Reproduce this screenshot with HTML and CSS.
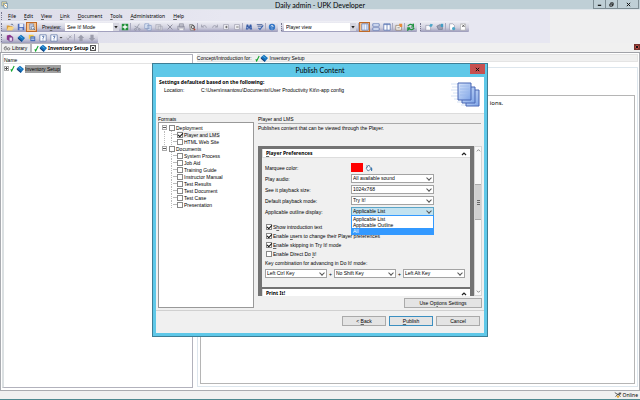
FILE: index.html
```html
<!DOCTYPE html>
<html lang="en">
<head>
<meta charset="utf-8">
<title>Daily admin - UPK Developer</title>
<link rel="stylesheet" href="styles.css">
</head>
<body>
<svg class="sprite" aria-hidden="true">
  <symbol id="i-open" viewBox="0 0 10 10"><path d="M1 3h3l1 1h3v5H1z" fill="#d99a3a"/><path d="M3 5h7L8 9H1z" fill="#f9d583"/><path d="M6 2q2-2 3 1" stroke="#5a6a90" fill="none"/></symbol>
  <symbol id="i-save" viewBox="0 0 10 10"><path d="M1 1h8v8H1z" fill="#4a68b8"/><path d="M3 1h5v4H3z" fill="#e8eefa"/><path d="M3 6h4v3H3z" fill="#b7c4e0"/></symbol>
  <symbol id="i-preview" viewBox="0 0 10 10"><path d="M2 1h5v7H2z" fill="#c2cbe0" stroke="#68779b" stroke-width=".7"/><circle cx="6" cy="6" r="2" fill="#dfe8f5" stroke="#70829f"/><path d="M7 7l2 2" stroke="#50617d"/></symbol>
  <symbol id="i-add" viewBox="0 0 10 10"><path d="M1 1h8v8H1z" fill="#22903a"/><path d="M5 2v6M2 5h6" stroke="#fff" stroke-width="1.6"/></symbol>
  <symbol id="i-cut" viewBox="0 0 10 10"><path d="M8 1L4 7M2 4l6 3" stroke="#9295a5"/><circle cx="3" cy="8" r="1.2" fill="none" stroke="#9295a5"/><circle cx="8" cy="8" r="1" fill="none" stroke="#9295a5"/></symbol>
  <symbol id="i-copy" viewBox="0 0 10 10"><path d="M1 1h5v6H1zM4 3h5v6H4z" fill="#e4ecf8" stroke="#7890bd" stroke-width=".8"/><path d="M5 5h3M5 7h3" stroke="#7890bd" stroke-width=".6"/></symbol>
  <symbol id="i-paste" viewBox="0 0 10 10"><path d="M1 2h6v6H1zM4 4h5v5H4z" fill="#d5d5de" stroke="#a4a5b4" stroke-width=".8"/></symbol>
  <symbol id="i-x" viewBox="0 0 10 10"><path d="M2 2l6 6M8 2L2 8" stroke="#8b8c9c" stroke-width="1.2"/></symbol>
  <symbol id="i-print" viewBox="0 0 10 10"><path d="M3 1h5v4H3zM1 4h8v4H1z" fill="#c6c6d0" stroke="#88899a" stroke-width=".8"/><path d="M3 7h5v2H3z" fill="#eee"/></symbol>
  <symbol id="i-find" viewBox="0 0 10 10"><path d="M2 2h4l2 3v4H3z" fill="#ddd" stroke="#666" stroke-width=".8"/><circle cx="6" cy="5" r="2" fill="none" stroke="#444"/><path d="M7 7l2 2" stroke="#bd3b26" stroke-width="1.5"/></symbol>
  <symbol id="i-undo" viewBox="0 0 10 10"><path d="M2 2v3h3M2 5q5-4 6 1" fill="none" stroke="#a2a3b3" stroke-width="1.2"/></symbol>
  <symbol id="i-redo" viewBox="0 0 10 10"><path d="M8 2v3H5M8 5Q3 1 2 6" fill="none" stroke="#a2a3b3" stroke-width="1.2"/></symbol>
  <symbol id="i-box" viewBox="0 0 10 10"><path d="M2 2h6v6H2z" fill="#f3f3f7" stroke="#9696a5" stroke-width=".8"/><path d="M4 5h3" stroke="#555"/></symbol>
  <symbol id="i-boxplus" viewBox="0 0 10 10"><path d="M2 2h6v6H2z" fill="#f3f3f7" stroke="#9696a5" stroke-width=".8"/><path d="M4 5h3M5.500 3.500v3" stroke="#555"/></symbol>
  <symbol id="i-binoc" viewBox="0 0 10 10"><path d="M2 2h2l1 3 1-3h2l1 6H6L5 6 4 8H1z" fill="#345aa5"/><path d="M2 6h2M7 6h1" stroke="#c5d8f5"/></symbol>
  <symbol id="i-spell" viewBox="0 0 10 10"><path d="M1 2h7M2 4h6" stroke="#3b5590"/><path d="M3 6l2 2 4-5" fill="none" stroke="#3f68b0" stroke-width="1.4"/></symbol>
  <symbol id="i-help" viewBox="0 0 10 10"><circle cx="5" cy="5" r="4" fill="#3577c6"/><path d="M3.500 4q1.500-2 3 0L5 5.500M5 7v1" fill="none" stroke="#fff"/></symbol>
  <symbol id="i-cols" viewBox="0 0 10 10"><path d="M1 1h8v8H1z" fill="#eef4ff" stroke="#5e79b5"/><path d="M4 1v8M7 1v8" stroke="#8ba5d6" stroke-width=".8"/></symbol>
  <symbol id="i-rows" viewBox="0 0 10 10"><path d="M1 1h8v3H1zM1 6h8v3H1z" fill="#eef4ff" stroke="#5e79b5"/></symbol>
  <symbol id="i-two" viewBox="0 0 10 10"><path d="M1 1h8v8H1z" fill="#fff" stroke="#5e79b5"/><path d="M5 1v8M1 2h8" stroke="#5e79b5"/></symbol>
  <symbol id="i-props" viewBox="0 0 10 10"><path d="M1 3h7v6H1z" fill="#f5f3ef" stroke="#88735c" stroke-width=".8"/><path d="M5 1h4v4H6z" fill="#e58b38"/><path d="M3 6h3" stroke="#777"/></symbol>
  <symbol id="i-sync" viewBox="0 0 10 10"><path d="M1 4q3-4 6-1l1-2v4H5M9 6q-3 4-6 1L1 9V6h3" fill="none" stroke="#239443" stroke-width="1.5"/></symbol>
  <symbol id="i-doc" viewBox="0 0 10 10"><path d="M1 3h6v6H1z" fill="#fafafd" stroke="#8d91a6" stroke-width=".8"/><path d="M5 4l2-3 3 1-2 3z" fill="#4aa5c8"/></symbol>
  <symbol id="i-docs" viewBox="0 0 10 10"><path d="M1 4l4-2 3 2v4H3z" fill="#9da2b5" stroke="#6d7389" stroke-width=".8"/><path d="M6 1h3v4H6z" fill="#439dc4"/></symbol>
  <symbol id="i-docdown" viewBox="0 0 10 10"><path d="M2 1h4l2 2v6H2z" fill="#fff" stroke="#8d91a6" stroke-width=".8"/><circle cx="7" cy="7" r="2" fill="#4aa5c8"/></symbol>
  <symbol id="i-docx" viewBox="0 0 10 10"><path d="M2 1h6v8H2z" fill="#fff" stroke="#aaa" stroke-width=".8"/><path d="M4 2l3 3M7 2L4 5" stroke="#444"/></symbol>
  <symbol id="i-module" viewBox="0 0 10 10"><path d="M1 2l4-1 4 3v4L5 9 1 7z" fill="#8d338e"/><path d="M4 4h4v5H4z" fill="#eddcf4" stroke="#5e367d" stroke-width=".7"/></symbol>
  <symbol id="i-book" viewBox="0 0 10 10"><path d="M1 4l4-3 5 4-4 5z" fill="#1572bd"/><path d="M1 4l5 4v2L1 6z" fill="#123f7c"/><path d="M4 3l3 2" stroke="#6bc3ef"/></symbol>
  <symbol id="i-topic" viewBox="0 0 10 10"><path d="M1 1h6v5H1z" fill="#f7cc47"/><path d="M3 3h6v6H3z" fill="#3d68b8"/><path d="M4 5h4M4 7h4" stroke="#fff" stroke-width=".8"/></symbol>
  <symbol id="i-question" viewBox="0 0 10 10"><path d="M1 1h8v8H1z" fill="#fafbff" stroke="#6b7fac"/><path d="M4 3q3-1 2 1L5 5v1M5 7v1" fill="none" stroke="#34589b"/></symbol>
  <symbol id="i-link" viewBox="0 0 10 10"><path d="M3 7l5-5M2 5l3 3M5 2l3 3" stroke="#a5a5b2" stroke-width="1.2"/></symbol>
  <symbol id="i-up" viewBox="0 0 10 10"><path d="M5 1l4 4H7v4H3V5H1z" fill="#9b9cab"/></symbol>
  <symbol id="i-down" viewBox="0 0 10 10"><path d="M5 9L1 5h2V1h4v4h2z" fill="#9b9cab"/></symbol>
  <symbol id="i-check" viewBox="0 0 6 8"><path d="M1 5l1 2 3-6" fill="none" stroke="#12a52c" stroke-width="1.300"/></symbol>
  <symbol id="i-glasses" viewBox="0 0 10 8"><path d="M1 4q2-3 4-1M5 5h4" fill="none" stroke="#666"/><circle cx="3" cy="5" r="1.500" fill="#ddd" stroke="#555" stroke-width=".7"/><circle cx="7" cy="5" r="1.500" fill="#ddd" stroke="#555" stroke-width=".7"/></symbol>
  <symbol id="i-app" viewBox="0 0 10 10"><path d="M1 1h6v5H1z" fill="#f5e6a0" stroke="#6a7f92" stroke-width=".8"/><path d="M3 3h5v6H4z" fill="#fff" stroke="#46708f" stroke-width=".8"/><path d="M4 4l3 3" stroke="#d49a28"/></symbol>
</svg>

<header class="titlebar">
  <svg class="icon app-icon"><use href="#i-app"/></svg>
  <h1 class="window-title">Daily admin - UPK Developer</h1>
  <div class="window-buttons">
    <button aria-label="Minimize"><svg viewBox="0 0 6 6"><path d="M1 4h4" stroke="#111" stroke-width="1.500"/></svg></button>
    <button aria-label="Restore"><svg viewBox="0 0 6 6"><path d="M2 2V1h3v3H4M1 2.500h3v2.500H1z" fill="none" stroke="#111"/></svg></button>
    <button class="wide" aria-label="Close"><svg viewBox="0 0 6 6"><path d="M1 1l4 4M5 1L1 5" stroke="#111" stroke-width="1.200"/></svg></button>
  </div>
</header>

<section class="bars">
  <nav class="menubar">
    <span class="grip"></span>
    <a href="#"><u>F</u>ile</a><a href="#"><u>E</u>dit</a><a href="#"><u>V</u>iew</a><a href="#"><u>L</u>ink</a><a href="#"><u>D</u>ocument</a><a href="#"><u>T</u>ools</a><a href="#"><u>A</u>dministration</a><a href="#"><u>H</u>elp</a>
  </nav>
  <div class="toolbar-row">
    <div class="toolbar">
      <span class="grip"></span>
      <button class="tool" aria-label="Open"><svg><use href="#i-open"/></svg></button>
      <button class="tool" aria-label="Save"><svg><use href="#i-save"/></svg></button>
      <button class="tool active" aria-label="Preview pane"><svg><use href="#i-preview"/></svg></button>
      <label class="preview-label" for="mode">Pre<u>v</u>iew:</label>
      <span class="bar-select mode"><select id="mode"><option>See It! Mode</option></select></span>
      <button class="tool" aria-label="Add"><svg><use href="#i-add"/></svg></button>
      <span class="sep"></span>
      <button class="tool" aria-label="Cut"><svg><use href="#i-cut"/></svg></button>
      <button class="tool" aria-label="Copy"><svg><use href="#i-copy"/></svg></button>
      <button class="tool" aria-label="Paste"><svg><use href="#i-paste"/></svg></button>
      <button class="tool" aria-label="Delete"><svg><use href="#i-x"/></svg></button>
      <button class="tool" aria-label="Print"><svg><use href="#i-print"/></svg></button>
      <button class="tool" aria-label="Print preview"><svg><use href="#i-find"/></svg></button>
      <span class="sep"></span>
      <button class="tool" aria-label="Undo"><svg><use href="#i-undo"/></svg></button>
      <button class="tool" aria-label="Redo"><svg><use href="#i-redo"/></svg></button>
      <button class="tool" aria-label="Expand"><svg><use href="#i-boxplus"/></svg></button>
      <button class="tool" aria-label="Collapse"><svg><use href="#i-box"/></svg></button>
      <span class="sep"></span>
      <button class="tool" aria-label="Find"><svg><use href="#i-binoc"/></svg></button>
      <button class="tool" aria-label="Spelling"><svg><use href="#i-spell"/></svg></button>
      <span class="sep"></span>
      <button class="tool" aria-label="Help"><svg><use href="#i-help"/></svg></button>
    </div>
    <div class="toolbar">
      <span class="grip"></span>
      <span class="bar-select view"><select aria-label="View"><option>Player view</option></select></span>
      <span class="sep"></span>
      <button class="tool active" aria-label="Columns"><svg><use href="#i-cols"/></svg></button>
      <button class="tool" aria-label="Rows"><svg><use href="#i-rows"/></svg></button>
      <button class="tool" aria-label="Split"><svg><use href="#i-two"/></svg></button>
      <span class="sep"></span>
      <button class="tool" aria-label="Properties"><svg><use href="#i-props"/></svg></button>
      <span class="sep"></span>
      <button class="tool" aria-label="Refresh"><svg><use href="#i-sync"/></svg></button>
    </div>
    <div class="toolbar">
      <span class="grip"></span>
      <button class="tool" aria-label="Check out"><svg><use href="#i-doc"/></svg></button>
      <button class="tool" aria-label="Check in"><svg><use href="#i-docs"/></svg></button>
      <span class="sep"></span>
      <button class="tool" aria-label="Get"><svg><use href="#i-docdown"/></svg></button>
      <button class="tool" aria-label="Cancel check out"><svg><use href="#i-docx"/></svg></button>
    </div>
  </div>
  <div class="toolbar-row">
    <div class="toolbar">
      <span class="grip"></span>
      <button class="tool" aria-label="New module"><svg><use href="#i-module"/></svg></button>
      <button class="tool" aria-label="New section"><svg><use href="#i-book"/></svg></button>
      <button class="tool" aria-label="New topic"><svg><use href="#i-topic"/></svg></button>
      <button class="tool" aria-label="New question"><svg><use href="#i-question"/></svg></button>
      <button class="tool" aria-label="New assessment"><svg><use href="#i-question"/></svg></button>
      <span class="drop-arrow"></span>
      <button class="tool" aria-label="Link"><svg><use href="#i-link"/></svg></button>
      <span class="sep"></span>
      <button class="tool" aria-label="Move up"><svg><use href="#i-up"/></svg></button>
      <button class="tool" aria-label="Move down"><svg><use href="#i-down"/></svg></button>
    </div>
  </div>
</section>

<nav class="tabs">
  <a href="#" class="tab"><svg class="icon"><use href="#i-glasses"/></svg>Library</a>
  <a href="#" class="tab current"><svg class="tick"><use href="#i-check"/></svg><svg class="icon"><use href="#i-book"/></svg>Inventory Setup<span class="tab-close"><svg viewBox="0 0 6 6"><path d="M1 1l4 4M5 1L1 5" stroke="#111" stroke-width="1.200"/></svg></span></a>
  <button class="pane-close" aria-label="Close pane"><svg viewBox="0 0 6 6"><path d="M1 1l4 4M5 1L1 5" stroke="#111" stroke-width="1.500"/></svg></button>
</nav>

<main class="workspace">
  <section class="outline">
    <h2 class="outline-head">Name</h2>
    <div class="outline-row"><span class="expander"></span><svg class="tick"><use href="#i-check"/></svg><svg class="icon"><use href="#i-book"/></svg><span class="selected">Inventory Setup</span></div>
  </section>
  <section class="concept">
    <div class="concept-head">Concept/Introduction for:<svg class="tick"><use href="#i-check"/></svg><svg class="icon"><use href="#i-book"/></svg>Inventory Setup</div>
    <div class="concept-frame"><div class="concept-page"><p>ions.</p></div></div>
  </section>
</main>

<footer class="status"><svg class="icon" viewBox="0 0 10 8"><path d="M1 1l3 2h4M2 6l3-3 3 3" fill="none" stroke="#333"/><circle cx="5" cy="6" r="1.500" fill="#e6a82e"/><path d="M6 1h3v2H6z" fill="#555"/></svg>Online</footer>

<div class="overlay">
<section class="dialog" role="dialog" aria-labelledby="dialog-title">
  <header class="dialog-title"><h2 id="dialog-title">Publish Content</h2><button class="dialog-close" aria-label="Close"><svg viewBox="0 0 6 6"><path d="M1 1l4 4M5 1L1 5" stroke="#111" stroke-width="1.200"/></svg></button></header>
  <div class="dialog-inner">
    <div class="banner">
      <div class="banner-text">
        <h3>Settings defaulted based on the following:</h3>
        <p><span class="loc">Location:</span><span>C:\Users\nsantosu\Documents\User Productivity Kit\n-app config</span></p>
      </div>
      <svg class="banner-icon" viewBox="0 0 30 26">
        <defs><linearGradient id="pg" x1="0" y1="0" x2="1" y2="1"><stop offset="0" stop-color="#d9e6fb"/><stop offset="1" stop-color="#7da3e6"/></linearGradient></defs>
        <path d="M0 2h7M1 5h6M0 8h7M2 11h5M0 14h7M3 17h8M6 20h9M10 23h6" stroke="#d5e2f5"/>
        <path d="M15 8h13v16H15z" fill="url(#pg)" stroke="#4966b4"/><path d="M11 5h13v16H11z" fill="url(#pg)" stroke="#4966b4"/><path d="M7 1h13v17H7z" fill="url(#pg)" stroke="#4966b4"/>
        <path d="M9 4h9M9 7h9M9 10h9M9 13h9" stroke="#9ab8eb" stroke-width=".8"/>
      </svg>
    </div>
    <div class="content">
      <section class="formats">
        <h4>Formats</h4>
        <ul class="tree">
          <li><span class="node"><span class="expander minus"></span><label><input type="checkbox">Deployment</label></span>
            <ul><li><label class="picked"><input type="checkbox" checked>Player and LMS</label></li><li><label><input type="checkbox">HTML Web Site</label></li></ul></li>
          <li><span class="node"><span class="expander minus"></span><label><input type="checkbox">Documents</label></span>
            <ul><li><label><input type="checkbox">System Process</label></li><li><label><input type="checkbox">Job Aid</label></li><li><label><input type="checkbox">Training Guide</label></li><li><label><input type="checkbox">Instructor Manual</label></li><li><label><input type="checkbox">Test Results</label></li><li><label><input type="checkbox">Test Document</label></li><li><label><input type="checkbox">Test Case</label></li><li><label><input type="checkbox">Presentation</label></li></ul></li>
        </ul>
      </section>
      <section class="settings">
        <h4>Player and LMS</h4>
        <p class="desc">Publishes content that can be viewed through the Player.</p>
        <div class="scroller">
          <div class="frame">
            <h5 class="group-head"><span><u>P</u>layer Preferences</span><svg viewBox="0 0 6 6"><path d="M1 4l2-2 2 2" fill="none" stroke="#222" stroke-width="1.200"/></svg></h5>
            <div class="group">
              <div class="field"><label for="color">Marquee color:</label><button id="color" class="swatch" aria-label="Red"></button><svg class="bucket" viewBox="0 0 8 8"><path d="M1 4l3-3 2 4-3 2zM2 1v3" fill="#eef4fa" stroke="#4e7397" stroke-width=".8"/><path d="M6 3q2 1 1 4H6z" fill="#3678b4"/></svg></div>
              <div class="field"><label for="audio">Play audio:</label><span class="select"><select id="audio"><option>All available sound</option></select></span></div>
              <div class="field"><label for="size">See it playback size:</label><span class="select"><select id="size"><option>1024x768</option></select></span></div>
              <div class="field"><label for="pmode">Default playback mode:</label><span class="select"><select id="pmode"><option>Try It!</option></select></span></div>
              <div class="field"><label for="display">Applicable outline display:</label><span class="select open"><select id="display"><option>Applicable List</option></select>
                <ul class="menu" role="listbox"><li role="option">Applicable List</li><li role="option">Applicable Outline</li><li role="option" class="hover">All</li></ul></span></div>
              <div class="checks">
                <label><input type="checkbox" checked><span>S<u>h</u>ow introduction text</span></label>
                <label><input type="checkbox" checked><span>Enable <u>u</u>sers to change their Player preferences</span></label>
                <label><input type="checkbox" checked><span><u>E</u>nable skipping in Try It! mode</span></label>
                <label><input type="checkbox"><span>Enable Direct Do <u>I</u>t!</span></label>
              </div>
              <p class="keys-title">Key combination for advancing in Do It! mode:</p>
              <div class="keys">
                <span class="select"><select aria-label="First key"><option>Left Ctrl Key</option></select></span><span class="plus">+</span>
                <span class="select"><select aria-label="Second key"><option>No Shift Key</option></select></span><span class="plus">+</span>
                <span class="select"><select aria-label="Third key"><option>Left Alt Key</option></select></span>
              </div>
            </div>
            <h5 class="group-head"><span>Print It!</span><svg viewBox="0 0 6 6"><path d="M1 4l2-2 2 2" fill="none" stroke="#222" stroke-width="1.200"/></svg></h5>
          </div>
          <div class="scrollbar" aria-hidden="true"><span class="arrow"><svg viewBox="0 0 6 6"><path d="M1 4l2-2 2 2" fill="none" stroke="#777"/></svg></span><span class="track"><span class="thumb"></span></span><span class="arrow"><svg viewBox="0 0 6 6"><path d="M1 2l2 2 2-2" fill="none" stroke="#777"/></svg></span></div>
        </div>
        <button class="btn options">Use Op<u>t</u>ions Settings</button>
      </section>
    </div>
    <footer class="actions"><button class="btn">&lt; <u>B</u>ack</button><button class="btn default"><u>P</u>ublish</button><button class="btn">Cancel</button></footer>
  </div>
</section>
</div>
</body>
</html>
```

FILE: styles.css
```css
* { box-sizing: border-box; margin: 0; padding: 0; }
body {
  height: 100vh; display: flex; flex-direction: column; overflow: hidden;
  background: #f0f0f0; color: #000;
  font: 5px/6px "Liberation Sans", sans-serif;
}
button, select, input { font: inherit; color: inherit; border: 0; background: none; appearance: none; border-radius: 0; }
button svg { display: block; }
a { color: inherit; text-decoration: none; }
ul { list-style: none; }
h1, h2, h3, h4, h5 { font: inherit; }
u { text-decoration: underline; text-decoration-color: #666; text-decoration-thickness: 1px; }
.sprite { position: absolute; width: 0; height: 0; }
.icon { width: 8px; height: 8px; flex: none; }
.tick { width: 5px; height: 7px; flex: none; }

.titlebar { flex: none; height: 10px; display: grid; grid-template-columns: 1fr auto 1fr; align-items: start; background: #bfcfd6; border-bottom: 1px solid #dfe5ea; }
.app-icon { margin: 1px 0 0 1px; }
.window-title { font-family: Lato, sans-serif; font-size: 7px; line-height: 10px; }
.window-buttons { justify-self: end; display: flex; margin-right: 1px; border: 1px solid #7e8d94; border-top: 0; }
.window-buttons button { width: 12px; height: 8px; display: grid; place-items: center; border-right: 1px solid #7e8d94; }
.window-buttons button.wide { width: 20px; border: 0; }
.window-buttons svg { width: 5px; height: 5px; }

.bars { flex: none; height: 33px; background: linear-gradient(90deg, #dcdce8, #e7e7f1 35%, #e7e7f1 86%, #efeff0 86%); }
.menubar { display: flex; align-items: center; gap: 8px; height: 11px; font-family: "Noto Sans", sans-serif; line-height: 8px; }
.menubar .grip { margin: 0 -4px 0 1px; }
.grip { flex: none; width: 3px; height: 8px; border-left: 1px dotted #77778f; }
.toolbar-row { display: flex; height: 11px; padding-left: 1px; }
.toolbar { display: flex; align-items: center; height: 11px; padding-right: 1px; margin-right: 3px; background: linear-gradient(#f1f1f7, #d0d0de 60%, #9c9bba); border-radius: 1px; }
.tool { flex: none; width: 11px; height: 10px; display: grid; place-items: center; }
.tool svg { width: 8px; height: 8px; }
.tool.active { background: #f8c28a; border: 1px solid #c06a28; }
.sep { flex: none; width: 1px; height: 8px; background: #aaaabf; }
.preview-label { width: 28px; padding-left: 5px; white-space: nowrap; }
.bar-select { position: relative; display: block; height: 8px; background: #fff; }
.bar-select select { display: block; width: 100%; height: 8px; padding-left: 2px; line-height: 8px; }
.bar-select::before { content: ""; position: absolute; right: 0; top: 0; width: 6px; height: 8px; background: #d5d5df; }
.bar-select::after { content: ""; position: absolute; right: 1px; top: 3px; width: 4px; height: 3px; background: #222; clip-path: polygon(0 0, 100% 0, 50% 100%); }
.mode { width: 54px; }
.view { width: 72px; margin-right: 2px; }
.drop-arrow { width: 4px; height: 2px; background: #444; clip-path: polygon(0 0, 100% 0, 50% 100%); }

.tabs { flex: none; display: flex; align-items: flex-end; height: 10px; padding-left: 1px; border-bottom: 1px solid #a0a2a8; line-height: 8px; }
.tab { display: flex; align-items: center; gap: 1px; width: 30px; height: 9px; padding: 0 1px; border: 1px solid #b8b8bd; border-bottom: 0; }
.tab.current { width: auto; gap: 0; padding: 0 2px; font-weight: 700; font-family: "Noto Sans", sans-serif; background: #fff; }
.tab.current .icon { margin-right: 1px; }
.tab-close { width: 6px; height: 6px; margin-left: 2px; border: 1px solid #555; }
.tab-close svg { display: block; width: 4px; height: 4px; }
.pane-close { margin: 0 0 2px auto; width: 6px; height: 6px; background: #b94c45; border: 1px solid #74302c; }

.workspace { flex: 1; min-height: 0; display: flex; gap: 4px; padding: 1px 1px 2px 1px; background: #fff; border: solid #a9abb0; border-width: 0 1px 1px; }
.outline { flex: 0 1 30%; border: 1px solid #b2b2bc; border-left: 2px solid #dbe0e2; }
.concept { flex: 1; display: flex; flex-direction: column; gap: 5px; padding-bottom: 1px; }
.outline-head { height: 9px; padding: 2px 0 0; border-bottom: 1px solid #e3e3e3; }
.outline-row { display: flex; align-items: center; gap: 1px; height: 9px; }
.expander { flex: none; width: 5px; height: 5px; border: 1px solid #aaa; background: linear-gradient(#555, #555) center / 3px 1px no-repeat, linear-gradient(#555, #555) center / 1px 3px no-repeat #fff; }
.expander.minus { background: linear-gradient(#555, #555) center / 3px 1px no-repeat #fff; }
.selected { height: 8px; padding: 0 1px 0 0; line-height: 8px; background: #a0a0a0; }
.concept-head { flex: none; display: flex; align-items: center; height: 8px; background: #f0f0f0; border: 1px solid #e4e4e4; border-left: 0; }
.concept-head .tick { margin-left: 3px; }
.concept-head .icon { margin-right: 2px; }
.concept-frame { flex: 1; display: flex; padding: 27px 2px 2px; border: 1px solid #dde6ed; }
.concept-page { flex: 1; border: 1px solid #b5b5b5; padding: 4px 0 0 289px; }
.concept-page p { font-family: "Noto Sans", sans-serif; font-size: 6px; line-height: 7px; }

.status { flex: none; display: flex; justify-content: flex-end; align-items: center; gap: 1px; height: 9px; padding-right: 2px; font-family: "Noto Sans", sans-serif; border-bottom: 1px solid #4f8990; }

.overlay { position: absolute; inset: 0; display: grid; place-items: center; }
.dialog { width: 336px; height: 274px; display: flex; flex-direction: column; padding: 0 3px 3px; background: #5fc8e8; border: 1px solid #3d7e96; }
.dialog-title { flex: none; position: relative; height: 13px; text-align: center; }
.dialog-title h2 { font-family: Lato, sans-serif; font-size: 7px; line-height: 13px; }
.dialog-close { position: absolute; right: -1px; top: 0; width: 15px; height: 10px; display: grid; place-items: center; background: #c75050; }
.dialog-close svg { width: 5px; height: 5px; }
.dialog-inner { flex: 1; min-height: 0; display: flex; flex-direction: column; background: #f0f0f0; }
.banner { flex: none; display: flex; justify-content: space-between; height: 37px; padding: 2px 3px; background: #fff; border-bottom: 1px solid #dcdcdc; }
.banner h3 { font-family: "Noto Sans", sans-serif; font-weight: 700; line-height: 7px; }
.banner p { display: flex; padding: 1px 0 0 5px; line-height: 7px; }
.loc { width: 37px; }
.banner-icon { width: 30px; height: 26px; margin-top: 3px; }
.content { flex: 1; min-height: 0; display: flex; gap: 4px; padding: 2px 2px 1px; border-bottom: 1px solid #d0d0d0; }
.formats { width: 96px; display: flex; flex-direction: column; }
.tree { flex: 1; padding: 1px 3px; background: #fff; border: 1px solid #999; margin-bottom: 1px; }
.node, .tree label, .checks label { display: flex; align-items: center; }
.tree li li, .node { height: 7px; }
.tree label { width: max-content; height: 7px; }
.tree ul { margin-left: 2px; border-left: 1px dotted #bbb; }
.tree > li:last-child > ul { margin-left: 3px; border: 0; }
.tree li li { display: flex; align-items: center; }
.tree li li::before { content: ""; width: 5px; height: 7px; margin-left: 6px; background: linear-gradient(#bbb, #bbb) center / 4px 1px no-repeat; border-left: 1px dotted #bbb; }
.node .expander { margin-right: 2px; }
.picked { background: #f0f0f0; }
input[type="checkbox"] { flex: none; width: 6px; height: 6px; margin-right: 1px; background: #fff; border: 1px solid #888; }
input[type="checkbox"]:checked::after { content: ""; display: block; width: 4px; height: 2px; border: solid #111; border-width: 0 0 1px 1px; transform: rotate(-45deg); }

.settings { flex: 1; min-width: 0; display: flex; flex-direction: column; }
.settings h4 { flex: none; height: 8px; border-bottom: 1px solid #a9a9a9; margin-right: 1px; }
.desc { height: 22px; padding: 1px 0 0; line-height: 7px; }
.scroller { display: flex; height: 150px; }
.frame { flex: 1; min-width: 0; overflow: hidden; border: solid #737373; border-width: 3px 4px 0; }
.group-head { display: flex; justify-content: space-between; height: 9px; padding: 0 3px; font-family: "Noto Sans", sans-serif; font-weight: 700; line-height: 9px; background: #fff; border: 1px solid #ddd; border-width: 0 0 1px 1px; }
.group-head svg { width: 6px; height: 6px; margin-top: 2px; }
.group { padding: 4px 4px 9px 3px; border-bottom: 2px solid #737373; }
.field { display: flex; align-items: center; height: 11px; }
.field label { width: 86px; white-space: nowrap; }
.field .select { width: 83px; }
.swatch { width: 12px; height: 9px; background: #f00; }
.bucket { width: 8px; height: 8px; margin-left: 2px; }
.select { position: relative; display: block; height: 9px; background: #fff; border: 1px solid #a3a3a3; }
.select select { display: block; width: 100%; height: 7px; padding-left: 1px; line-height: 7px; }
.select::after { content: ""; position: absolute; right: 2px; top: 1px; width: 3px; height: 3px; border: solid #555; border-width: 0 1px 1px 0; transform: rotate(45deg); pointer-events: none; }
.select.open { background: #c2e2f0; border-color: #5ba5c8; }
.menu { position: absolute; z-index: 1; left: -1px; right: -1px; top: 7px; background: #fff; border: 1px solid #3399ff; line-height: 6px; }
.menu li { padding-left: 1px; }
.menu .hover { background: #3399ff; color: #fff; }
.checks { padding: 5px 0 0 1px; }
.checks label { height: 9px; }
.keys-title { padding: 2px 0 3px; }
.keys { display: flex; align-items: center; }
.keys .select { flex: 0 1 62px; }
.plus { width: 7px; text-align: center; }
.scrollbar { width: 8px; display: flex; flex-direction: column; background: #f8f8f8; border: 1px solid #d5d5d5; }
.arrow { height: 7px; display: grid; place-items: center; }
.arrow svg { width: 5px; height: 5px; }
.track { flex: 1; padding-top: 30px; }
.thumb { display: block; height: 36px; background: repeating-linear-gradient(#666 0 1px, transparent 1px 2px) center / 3px 5px no-repeat #d0d0d0; border: solid #aaa; border-width: 1px 0; }
.btn { height: 10px; line-height: 8px; text-align: center; background: #e4e4e4; border: 1px solid #aaa; }
.options { align-self: flex-end; width: 78px; margin-top: 2px; }
.actions { flex: none; display: flex; justify-content: flex-end; gap: 3px; height: 22px; padding: 5px 4px 0; }
.actions .btn { width: 44px; }
.btn.default { border-color: #3c8fc0; }
```
